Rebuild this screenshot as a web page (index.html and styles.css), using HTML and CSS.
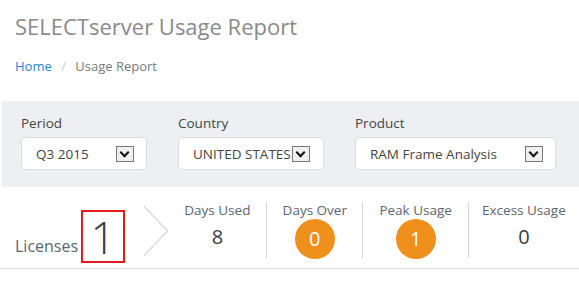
FILE: index.html
```html
<!DOCTYPE html>
<html lang="en">
<head>
  <meta charset="UTF-8">
  <title>SELECTserver Usage Report</title>
  <link rel="stylesheet" href="styles.css">
</head>
<body>
  <div class="page">
    <h1 class="title">SELECTserver Usage Report</h1>
    <div class="crumbs">
      <a href="#">Home</a>
      <span class="sep">/</span>
      <span class="current">Usage Report</span>
    </div>

    <div class="filters">
      <div class="filter period">
        <label>Period</label>
        <div class="select"><span>Q3 2015</span><i class="arrow"></i></div>
      </div>
      <div class="filter country">
        <label>Country</label>
        <div class="select"><span>UNITED STATES</span><i class="arrow"></i></div>
      </div>
      <div class="filter product">
        <label>Product</label>
        <div class="select"><span>RAM Frame Analysis</span><i class="arrow"></i></div>
      </div>
    </div>

    <div class="summary">
      <div class="licenses">
        <span class="lic-label">Licenses</span>
        <span class="lic-count">1</span>
      </div>
      <svg class="chevron" width="28" height="52" viewBox="0 0 28 52">
        <polyline points="2,1 26,26 2,51" fill="none" stroke="#d4d4d4" stroke-width="1.2"/>
      </svg>
      <div class="stat s1">
        <div class="stat-label">Days Used</div>
        <div class="stat-value">8</div>
      </div>
      <div class="stat s2">
        <div class="stat-label">Days Over</div>
        <div class="stat-value has-badge"><span class="badge">0</span></div>
      </div>
      <div class="stat s3">
        <div class="stat-label">Peak Usage</div>
        <div class="stat-value has-badge"><span class="badge">1</span></div>
      </div>
      <div class="stat s4">
        <div class="stat-label">Excess Usage</div>
        <div class="stat-value">0</div>
      </div>
    </div>
  </div>
</body>
</html>
```

FILE: styles.css
```css
body {
  margin: 0;
  font-family: 'Open Sans', 'Noto Sans', sans-serif;
  background: #fff;
  color: #555;
}
.page {
  width: 579px;
  overflow: hidden;
}
.title {
  margin: 0;
  padding: 11px 0 0 15px;
  font-size: 22px;
  font-weight: normal;
  color: #8a8a8a;
  line-height: 30px;
}
.crumbs {
  padding: 15px 0 0 15px;
  font-size: 13px;
  line-height: 20px;
  height: 36px;
}
.crumbs a {
  color: #1a84d6;
  text-decoration: none;
}
.crumbs .sep {
  color: #c8c8c8;
  margin: 0 6px 0 6px;
}
.crumbs .current {
  color: #7a7a7a;
}
.filters {
  margin: 9px 0 0 2px;
  height: 86px;
  background: #eeeff3;
  display: flex;
  padding-left: 19px;
  box-sizing: border-box;
}
.filter label {
  display: block;
  margin-top: 13px;
  font-size: 13.5px;
  line-height: 18px;
  color: #444;
}
.filter + .filter {
  margin-left: 31px;
}
.select {
  margin-top: 5px;
  height: 33px;
  box-sizing: border-box;
  background: #fff;
  border: 1px solid #dcdcdc;
  border-radius: 4px;
  display: flex;
  align-items: center;
  padding-left: 14px;
  font-size: 13.5px;
  color: #444;
}
.select span {
  flex: 1;
  white-space: nowrap;
  overflow: hidden;
}
.arrow {
  width: 16px;
  height: 14px;
  border: 1px solid #777;
  background: #f0f0f0;
  margin-right: 12px;
  position: relative;
  flex: none;
}
.arrow::after {
  content: "";
  position: absolute;
  left: 4px;
  top: 2px;
  width: 5px;
  height: 5px;
  border-right: 2px solid #111;
  border-bottom: 2px solid #111;
  transform: rotate(45deg);
}
.period .select { width: 126px; }
.country .select { width: 146px; }
.country .arrow { margin-right: 13px; }
.product .select { width: 201px; }

.summary {
  display: flex;
  align-items: flex-start;
  height: 81px;
  border-bottom: 1px solid #dedede;
  padding-left: 15px;
}
.licenses {
  display: flex;
  align-items: flex-end;
  margin-top: 23px;
}
.lic-label {
  font-size: 16px;
  color: #5d6670;
  line-height: 20px;
  margin-bottom: 7px;
}
.lic-count {
  margin-left: 3px;
  width: 44px;
  height: 53px;
  box-sizing: border-box;
  border: 2px solid #e41b1b;
  text-align: center;
  font-size: 44px;
  line-height: 50px;
  color: #363d45;
  font-weight: 300;
}
.chevron {
  margin: 18px 0 0 17px;
}
.stat {
  text-align: center;
  margin-top: 15px;
  height: 56px;
}
.stat + .stat {
  border-left: 1px solid #d6d6d6;
}
.s1 { width: 99px; margin-left: -1px; }
.s2 { width: 97px; }
.s3 { width: 106px; }
.s4 { width: 112px; }
.stat-label {
  font-size: 13.5px;
  color: #5d6670;
  line-height: 18px;
  margin-top: -1px;
}
.stat-value {
  margin-top: 4px;
  font-size: 20px;
  color: #363d45;
  line-height: 28px;
  display: flex;
  justify-content: center;
}
.stat-value.has-badge {
  margin-top: 0;
}
.badge {
  width: 40px;
  height: 40px;
  border-radius: 50%;
  background: #f0901c;
  color: #fff;
  font-size: 20px;
  line-height: 40px;
}
```
